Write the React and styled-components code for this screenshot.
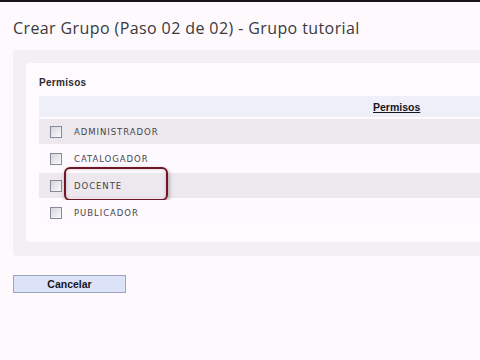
import styled, { createGlobalStyle } from 'styled-components'

const GlobalStyle = createGlobalStyle`
  html, body {
    margin: 0;
    padding: 0;
    background: #fdf9fd;
    overflow: hidden;
  }
  body {
    width: 480px;
    height: 360px;
  }
`

const permisos = ['ADMINISTRADOR', 'CATALOGADOR', 'DOCENTE', 'PUBLICADOR']

export default function App() {
   return (
      <>
         <GlobalStyle />
         <TopRule />
         <Page>
            <Title>Crear Grupo (Paso 02 de 02) - Grupo tutorial</Title>
            <OuterPanel>
               <InnerPanel>
                  <SectionLabel>Permisos</SectionLabel>
                  <Table>
                     <HeaderRow>
                        <span />
                        <HeaderCell>Permisos</HeaderCell>
                     </HeaderRow>
                     {permisos.map((p, i) => (
                        <Row key={p} $alt={i % 2 === 0}>
                           <Check type="checkbox" />
                           <RowLabel>{p}</RowLabel>
                           {p === 'DOCENTE' && <Highlight />}
                        </Row>
                     ))}
                  </Table>
               </InnerPanel>
            </OuterPanel>
            <CancelButton type="button">Cancelar</CancelButton>
         </Page>
      </>
   )
}

const TopRule = styled.div`
  height: 2px;
  background: #161616;
`

const Page = styled.div`
  padding-left: 13px;
`

const Title = styled.h1`
  margin: 0;
  padding-top: 15px;
  font-family: 'Open Sans', 'Liberation Sans', sans-serif;
  font-weight: 400;
  font-size: 16px;
  letter-spacing: 0.4px;
  line-height: 22px;
  color: #3a3a3e;
`

const OuterPanel = styled.div`
  margin-top: 11px;
  padding: 13px 0 14px 13px;
  background: #f4eff4;
  border-radius: 4px 0 0 4px;
`

const InnerPanel = styled.div`
  padding: 13px 0 17px 13px;
  background: #fefafe;
  border-radius: 3px 0 0 3px;
`

const SectionLabel = styled.div`
  font-family: 'Liberation Sans', Arial, sans-serif;
  font-weight: 700;
  font-size: 10px;
  letter-spacing: 0.3px;
  line-height: 14px;
  color: #2a2a30;
  margin-bottom: 6px;
`

const Table = styled.div`
  display: flex;
  flex-direction: column;
  gap: 2px;
`

const HeaderRow = styled.div`
  display: grid;
  grid-template-columns: 334px 1fr;
  align-items: center;
  height: 21px;
  background: #efeffa;
`

const HeaderCell = styled.span`
  font-family: 'Liberation Sans', Arial, sans-serif;
  font-weight: 700;
  font-size: 10.5px;
  color: #15151c;
  text-decoration: underline;
`

const Row = styled.div`
  position: relative;
  display: flex;
  align-items: center;
  height: 25px;
  padding-left: 11px;
  background: ${p => (p.$alt ? '#ede8ee' : '#fef9fe')};
`

const Check = styled.input`
  appearance: none;
  margin: 0;
  width: 12px;
  height: 12px;
  border: 1px solid #868a9a;
  background: linear-gradient(135deg, #d4d4dc, #fbfbfd);
  box-sizing: border-box;
`

const RowLabel = styled.span`
  margin-left: 12px;
  font-family: 'DejaVu Sans', Verdana, sans-serif;
  font-size: 8.5px;
  letter-spacing: 0.95px;
  color: #45454c;
`

const Highlight = styled.div`
  position: absolute;
  left: 25px;
  top: -6px;
  width: 104px;
  height: 34px;
  box-sizing: border-box;
  border: 2px solid #6e1526;
  border-radius: 6px;
  box-shadow: 1px 2px 4px rgba(80, 40, 50, 0.4), inset 0 0 3px rgba(80, 40, 50, 0.25);
`

const CancelButton = styled.button`
  display: block;
  margin-top: 19px;
  width: 113px;
  height: 18px;
  padding: 0;
  background: #dce2f8;
  border: 1px solid #9da3bd;
  font-family: 'Liberation Sans', Arial, sans-serif;
  font-weight: 700;
  font-size: 10.5px;
  color: #16161e;
`
